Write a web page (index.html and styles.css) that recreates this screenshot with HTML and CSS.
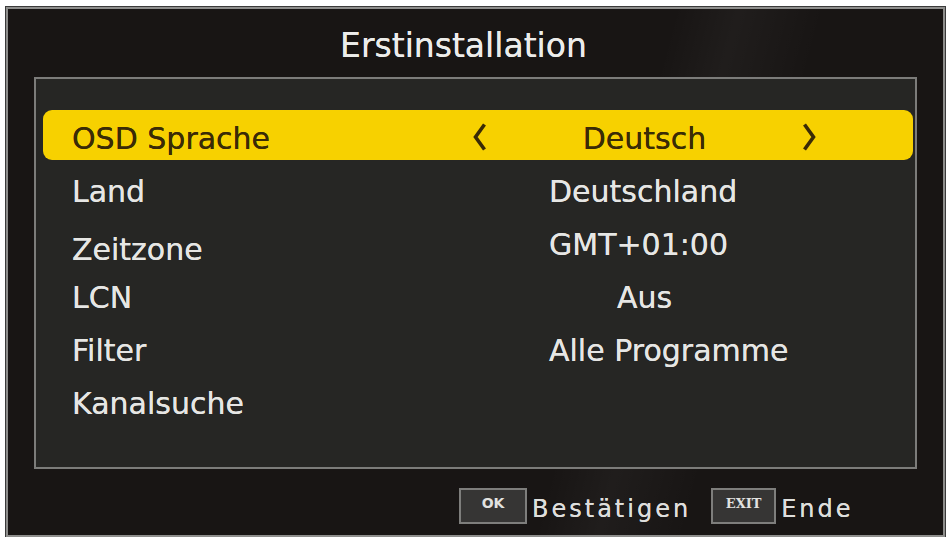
FILE: index.html
```html
<!DOCTYPE html>
<html lang="de">
<head>
<meta charset="utf-8">
<title>Erstinstallation</title>
<link rel="stylesheet" href="styles.css">
</head>
<body>
<div class="screen">
  <div class="title">Erstinstallation</div>
  <div class="panel">
    <div class="row selected">
      <span class="label">OSD Sprache</span>
      <div class="selector">
        <svg class="chev" width="15" height="28" viewBox="0 0 15 28"><path d="M12.5 1.5 L3.5 14 L12.5 26.5" fill="none" stroke="#3a2b06" stroke-width="3.6" stroke-linejoin="miter"/></svg>
        <span class="sel-value">Deutsch</span>
        <svg class="chev" width="15" height="28" viewBox="0 0 15 28"><path d="M2.5 1.5 L11.5 14 L2.5 26.5" fill="none" stroke="#3a2b06" stroke-width="3.6" stroke-linejoin="miter"/></svg>
      </div>
    </div>
    <div class="row">
      <span class="label">Land</span>
      <span class="value">Deutschland</span>
    </div>
    <div class="row">
      <span class="label low">Zeitzone</span>
      <span class="value">GMT+01:00</span>
    </div>
    <div class="row">
      <span class="label">LCN</span>
      <span class="value indent">Aus</span>
    </div>
    <div class="row">
      <span class="label">Filter</span>
      <span class="value">Alle Programme</span>
    </div>
    <div class="row">
      <span class="label">Kanalsuche</span>
    </div>
  </div>
  <div class="footer">
    <span class="key">OK</span>
    <span class="hint">Bestätigen</span>
    <span class="key key-exit">EXIT</span>
    <span class="hint">Ende</span>
  </div>
</div>
</body>
</html>
```
FILE: styles.css
```css
* { box-sizing: border-box; }

html, body {
  margin: 0;
  padding: 0;
  background: #ffffff;
}

body {
  font-family: "DejaVu Sans", "Liberation Sans", sans-serif;
  color: #e6e6e4;
}

.screen {
  margin: 7px 0 0 6px;
  width: 939px;
  height: 530px;
  border: 2px solid #8e8e8c;
  outline: 1px solid #3a3a3a;
  background:
    linear-gradient(105deg, rgba(255,255,255,0) 62%, rgba(255,255,255,0.035) 68%, rgba(255,255,255,0) 76%),
    #181514;
  display: flex;
  flex-direction: column;
}

.title {
  height: 68px;
  padding-top: 5px;
  line-height: 63px;
  font-size: 33px;
  text-align: center;
  padding-right: 24px;
  color: #ececea;
  text-shadow: 0 0 0.6px #ececea;
}

.panel {
  margin: 0 26px;
  height: 392px;
  border: 2px solid #7c7c7a;
  background: #262624;
  padding: 31px 2px 0 7px;
  display: flex;
  flex-direction: column;
  gap: 3px;
}

.row {
  display: grid;
  grid-template-columns: 390px 87px 1fr;
  height: 50px;
  padding-left: 29px;
  font-size: 30px;
  line-height: 42px;
  padding-top: 8px;
  align-items: start;
  text-shadow: 0 0 0.6px currentColor;
}

.row.selected {
  background: #f7d100;
  border-radius: 9px;
  color: #3a2b06;
  padding-top: 0;
  align-items: center;
}

.row.selected .label {
  padding-top: 8px;
  line-height: 42px;
  align-self: start;
}

.label.low { padding-top: 5px; }

.value { grid-column: 3; }
.value.indent { padding-left: 68px; }

.selector {
  grid-column: 2 / 4;
  width: 358px;
  display: flex;
  align-items: center;
  padding: 0 3px 0 10px;
  height: 50px;
}

.chev { display: block; flex: none; margin-top: 3px; }

.sel-value {
  flex: 1;
  text-align: center;
  padding-top: 8px;
  line-height: 42px;
  align-self: start;
}

.footer {
  flex: 1;
  display: flex;
  align-items: center;
  padding: 8px 0 0 451px;
}

.key {
  width: 68px;
  height: 36px;
  border: 2px solid #7e7e7c;
  background: #363534;
  color: #e2e2e0;
  font-size: 14px;
  font-weight: bold;
  display: flex;
  justify-content: center;
  align-items: center;
  padding-bottom: 6px;
}

.key-exit {
  width: 65px;
  margin-left: 20px;
  font-family: "DejaVu Serif", "Liberation Serif", serif;
  font-size: 13px;
}

.hint {
  margin-left: 5px;
  padding-top: 6px;
  font-size: 24px;
  letter-spacing: 3px;
  color: #dededc;
  text-shadow: 0 0 0.6px #dededc;
}
```
